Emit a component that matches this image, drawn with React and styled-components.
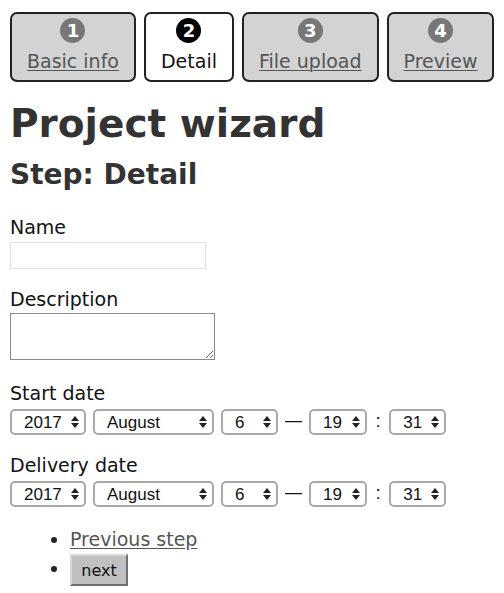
import React from "react";
import styled, { createGlobalStyle } from "styled-components";

const GlobalStyle = createGlobalStyle`
  body {
    margin: 0;
    padding: 10px;
    background: #fff;
    color: #111;
    font-family: "DejaVu Sans", Verdana, sans-serif;
    font-size: 19px;
  }
`;

const Steps = styled.nav`
  display: flex;
  gap: 8px;
  margin-top: 2px;
`;

const StepTab = styled.a`
  flex: none;
  display: flex;
  flex-direction: column;
  align-items: center;
  height: 70px;
  box-sizing: border-box;
  padding: 4px 15px 0;
  border: 2px solid #222;
  border-radius: 7px;
  background: ${(p) => (p.$active ? "#fff" : "#d3d3d3")};
  color: ${(p) => (p.$active ? "#111" : "#555")};
  text-decoration: none;
  white-space: nowrap;
  cursor: pointer;
`;

const StepNumber = styled.span`
  display: flex;
  align-items: center;
  justify-content: center;
  width: 25px;
  height: 25px;
  border-radius: 50%;
  background: ${(p) => (p.$active ? "#000" : "#777")};
  color: #fff;
  font-weight: bold;
  font-size: 18px;
  line-height: 1;
`;

const StepLabel = styled.span`
  margin-top: 7px;
  line-height: 23px;
  text-decoration: ${(p) => (p.$active ? "none" : "underline")};
  text-underline-offset: 2px;
  text-decoration-thickness: 1px;
`;

const Title = styled.h1`
  margin: 20px 0 0;
  font-size: 39px;
  line-height: 44px;
  color: #333;
`;

const Subtitle = styled.h2`
  margin: 12px 0 0;
  font-size: 28px;
  line-height: 34px;
  color: #333;
`;

const Form = styled.form`
  margin-top: 24px;
`;

const Field = styled.div`
  display: flex;
  flex-direction: column;
  align-items: flex-start;
  margin-bottom: 19px;
`;

const Label = styled.label`
  line-height: 23px;
  margin-bottom: 2px;
`;

const TextInput = styled.input`
  box-sizing: border-box;
  width: 196px;
  height: 27px;
  margin-top: 1px;
  border: 1px solid #e2e2e2;
  padding: 2px 4px;
  font: inherit;
  font-size: 15px;
  outline: none;
`;

const TextArea = styled.textarea`
  box-sizing: border-box;
  width: 205px;
  height: 47px;
  margin: 0 0 3px;
  border: 1px solid #8a8a8a;
  font-family: "Liberation Mono", monospace;
  font-size: 13px;
`;

const DateRow = styled.div`
  display: flex;
  align-items: center;
  gap: 7px;
  margin-top: 2px;
  font-family: "Liberation Sans", Arial, sans-serif;
  font-size: 17px;
`;

const SelectWrap = styled.span`
  position: relative;
  display: inline-flex;
  width: ${(p) => p.$w}px;
`;

const Select = styled.select`
  appearance: none;
  -webkit-appearance: none;
  box-sizing: border-box;
  width: 100%;
  height: 26px;
  padding: 0 20px 0 12px;
  border: 2px solid #a9a9a9;
  border-radius: 5px;
  background: #fff;
  color: #111;
  font: inherit;
  outline: none;
`;

const Arrows = styled.svg`
  position: absolute;
  right: 7px;
  top: 7px;
  pointer-events: none;
`;

const Sep = styled.span`
  padding: 0 ${(p) => p.$pad}px 3px;
  color: #111;
  font-size: ${(p) => p.$size}px;
  line-height: 1;
`;

const Actions = styled.ul`
  margin: 21px 0 0;
  padding-left: 60px;
  line-height: 23px;
  color: #222;
  li {
    margin-bottom: 2px;
  }
`;

const StepLink = styled.a`
  color: #555;
  text-decoration: underline;
  text-underline-offset: 2px;
  cursor: pointer;
`;

const NextButton = styled.button`
  width: 58px;
  height: 32px;
  margin-top: 1px;
  background: #c0c0c0;
  border: 2px solid #d8d8d8;
  border-right-color: #6f6f6f;
  border-bottom-color: #6f6f6f;
  font-family: "DejaVu Sans", Verdana, sans-serif;
  font-size: 16px;
  color: #111;
  padding: 0;
  vertical-align: middle;
`;

const steps = [
  { n: 1, label: "Basic info" },
  { n: 2, label: "Detail", active: true },
  { n: 3, label: "File upload" },
  { n: 4, label: "Preview" },
];

const months = [
  "January", "February", "March", "April", "May", "June",
  "July", "August", "September", "October", "November", "December",
];

function Dropdown({ width, value, options }) {
  return (
    <SelectWrap $w={width}>
      <Select defaultValue={value}>
        {options.map((o) => (
          <option key={o} value={o}>
            {o}
          </option>
        ))}
      </Select>
      <Arrows width="8" height="12" viewBox="0 0 8 12">
        <path d="M4 0 L8 5 L0 5 Z M0 7 L8 7 L4 12 Z" fill="#222" />
      </Arrows>
    </SelectWrap>
  );
}

const range = (a, b) => Array.from({ length: b - a + 1 }, (_, i) => String(a + i));

function DatePicker() {
  return (
    <DateRow>
      <Dropdown width={76} value="2017" options={range(2010, 2025)} />
      <Dropdown width={121} value="August" options={months} />
      <Dropdown width={57} value="6" options={range(1, 31)} />
      <Sep $size={17} $pad={0}>—</Sep>
      <Dropdown width={58} value="19" options={range(0, 23)} />
      <Sep $size={19} $pad={1.5}>:</Sep>
      <Dropdown width={57} value="31" options={range(0, 59)} />
    </DateRow>
  );
}

export default function App() {
  return (
    <>
      <GlobalStyle />
      <Steps>
        {steps.map((s) => (
          <StepTab key={s.n} $active={s.active}>
            <StepNumber $active={s.active}>{s.n}</StepNumber>
            <StepLabel $active={s.active}>{s.label}</StepLabel>
          </StepTab>
        ))}
      </Steps>
      <Title>Project wizard</Title>
      <Subtitle>Step: Detail</Subtitle>
      <Form onSubmit={(e) => e.preventDefault()}>
        <Field>
          <Label>Name</Label>
          <TextInput type="text" />
        </Field>
        <Field>
          <Label>Description</Label>
          <TextArea />
        </Field>
        <Field>
          <Label>Start date</Label>
          <DatePicker />
        </Field>
        <Field>
          <Label>Delivery date</Label>
          <DatePicker />
        </Field>
        <Actions>
          <li>
            <StepLink>Previous step</StepLink>
          </li>
          <li>
            <NextButton type="submit">next</NextButton>
          </li>
        </Actions>
      </Form>
    </>
  );
}
